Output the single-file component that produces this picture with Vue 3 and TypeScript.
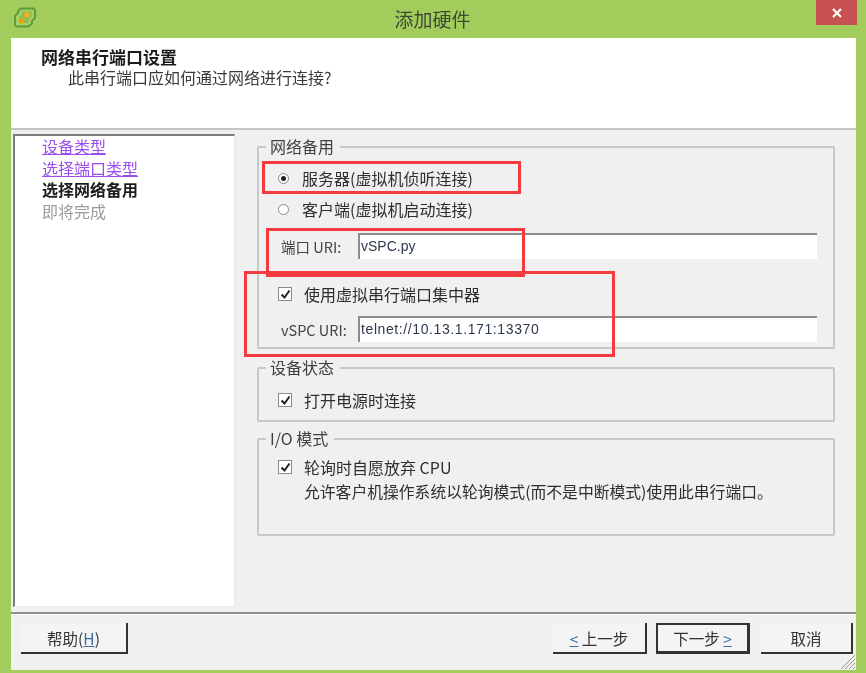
<script setup lang="ts">
const steps = [
  { label: '设备类型', kind: 'link' },
  { label: '选择端口类型', kind: 'link' },
  { label: '选择网络备用', kind: 'current' },
  { label: '即将完成', kind: 'todo' },
]
</script>

<template>
  <div class="window">
    <header class="titlebar">
      <svg class="logo" width="24" height="21" viewBox="0 0 24 21">
        <path d="M8 1.500H20.500l1.500 1.500V11l-3 3v2.500L15.500 19.500H3.500L2 18V9l3-3V4z" fill="#a6d066" stroke="#5f9c38" stroke-width="2" stroke-linejoin="round" />
        <path d="M9 4.500H18.500V10l-3 3v3H6V10l3-3z" fill="#8dbd52" />
        <circle cx="8.500" cy="14" r="2.800" fill="#e8a010" />
        <circle cx="14" cy="8" r="2.800" fill="#eeb020" />
      </svg>
      <span class="title">添加硬件</span>
      <button class="close">
        <svg width="10" height="10" viewBox="0 0 10 10"><path d="M1 1l8 8M9 1l-8 8" stroke="#fff" stroke-width="2.200" /></svg>
      </button>
    </header>

    <div class="dialog">
      <section class="head">
        <h1>网络串行端口设置</h1>
        <p>此串行端口应如何通过网络进行连接?</p>
      </section>

      <main class="body">
        <nav class="steps">
          <div v-for="s in steps" :key="s.label" :class="['step', s.kind]">{{ s.label }}</div>
        </nav>

        <div class="panes">
          <div class="group g1">
            <span class="legend">网络备用</span>
            <label class="opt"><span class="radio on"></span>服务器(虚拟机侦听连接)</label>
            <label class="opt second"><span class="radio"></span>客户端(虚拟机启动连接)</label>
            <div class="field f1"><span class="flabel">端口 URI:</span><div class="input">vSPC.py</div></div>
            <label class="opt third"><span class="check"><svg width="11" height="11" viewBox="0 0 11 11"><path d="M1.500 5.500l3 3 5-7" fill="none" stroke="#222" stroke-width="2" /></svg></span>使用虚拟串行端口集中器</label>
            <div class="field f2"><span class="flabel">vSPC URI:</span><div class="input wide">telnet://10.13.1.171:13370</div></div>
          </div>

          <div class="group g2">
            <span class="legend">设备状态</span>
            <label class="opt"><span class="check"><svg width="11" height="11" viewBox="0 0 11 11"><path d="M1.500 5.500l3 3 5-7" fill="none" stroke="#222" stroke-width="2" /></svg></span>打开电源时连接</label>
          </div>

          <div class="group g3">
            <span class="legend">I/O 模式</span>
            <label class="opt"><span class="check"><svg width="11" height="11" viewBox="0 0 11 11"><path d="M1.500 5.500l3 3 5-7" fill="none" stroke="#222" stroke-width="2" /></svg></span>轮询时自愿放弃 CPU</label>
            <p class="hint">允许客户机操作系统以轮询模式(而不是中断模式)使用此串行端口。</p>
          </div>
        </div>
      </main>

      <footer class="foot">
        <button class="btn help">帮助(<u>H</u>)</button>
        <div class="spacer"></div>
        <button class="btn back"><u>&lt;</u> 上一步</button>
        <button class="btn next">下一步 <u>&gt;</u></button>
        <button class="btn cancel">取消</button>
      </footer>
      <svg class="grip" width="18" height="18" viewBox="0 0 18 18"><path d="M17 3L3 17M17 7L7 17M17 11L11 17M17 15L15 17" stroke="#999" stroke-width="1" /></svg>
    </div>

    <div class="mark m1"></div>
    <div class="mark m2"></div>
    <div class="mark m3"></div>
  </div>
</template>

<style>
html, body { margin: 0; background: #a2cd5c; }
</style>

<style scoped>
.window {
  position: relative;
  width: 866px;
  height: 673px;
  background: #a2cd5c;
  overflow: hidden;
  font-family: "Noto Sans CJK SC", "Liberation Sans", sans-serif;
  font-size: 16px;
  color: #333;
  display: flex;
  flex-direction: column;
  box-sizing: border-box;
  padding: 0 10px 3px 11px;
  filter: blur(0.5px);
}
.titlebar {
  height: 38px;
  flex: none;
  display: flex;
  align-items: center;
  justify-content: center;
  position: relative;
}
.logo { position: absolute; left: 2px; top: 7px; }
.title { font-size: 19px; color: #3d4a33; margin-top: -2px; margin-left: -2px; }
.close {
  position: absolute;
  right: -1px;
  top: 0;
  width: 41px;
  height: 25px;
  padding: 0;
  border: 0;
  background: #c75050;
  display: flex;
  align-items: center;
  justify-content: center;
}
.dialog {
  position: relative;
  flex: 1;
  display: flex;
  flex-direction: column;
  background: #f0f0f0;
  min-height: 0;
}
.head {
  height: 92px;
  flex: none;
  box-sizing: border-box;
  background: #fff;
  padding: 9px 0 0 30px;
  border-bottom: 2px solid #c4c4c4;
}
.head h1 { margin: 0; font-size: 17px; line-height: 20px; font-weight: 700; color: #1c1c1c; }
.head p { margin: 0 0 0 27px; font-size: 16px; line-height: 20px; color: #3a3a3a; }
.body {
  flex: 1;
  display: flex;
  min-height: 0;
  padding: 4px 0 5px 2px;
}
.steps {
  width: 222px;
  flex: none;
  box-sizing: border-box;
  background: #fff;
  border-top: 2px solid #7d7d7d;
  border-left: 2px solid #7d7d7d;
  border-right: 1px solid #e8e8e8;
  border-bottom: 1px solid #e8e8e8;
  padding: 0 0 0 27px;
}
.step { line-height: 21.500px; font-size: 16px; }
.step.link { color: #9b4df0; text-decoration: underline; }
.step.current { font-weight: 700; color: #1c1c1c; }
.step.todo { color: #9a9a9a; }
.panes {
  flex: 1;
  padding: 12px 21px 0 22px;
  display: flex;
  flex-direction: column;
}
.group {
  position: relative;
  box-sizing: border-box;
  border: 2px solid #c8c8c8;
  border-radius: 2px;
}
.g1 { height: 203px; padding-top: 19px; }
.g2 { height: 55px; margin-top: 18px; padding-top: 20px; }
.g3 { height: 98px; margin-top: 16px; padding-top: 16px; }
.legend {
  position: absolute;
  left: 7px;
  top: -12px;
  padding: 0 6px 0 4px;
  background: #f0f0f0;
  line-height: 20px;
  font-size: 16px;
  color: #3f3f3f;
}
.opt {
  display: flex;
  align-items: center;
  height: 22px;
  padding-left: 19px;
  color: #2e2e2e;
}
.opt.second { margin-top: 9px; }
.opt.third { margin-top: 24px; }
.radio {
  width: 11px;
  height: 11px;
  border-radius: 50%;
  background: #fff;
  border: 1px solid #8a8a8a;
  margin-right: 13px;
  box-sizing: border-box;
  display: flex;
  align-items: center;
  justify-content: center;
}
.radio.on::after {
  content: "";
  width: 5px;
  height: 5px;
  border-radius: 50%;
  background: #222;
}
.check {
  width: 14px;
  height: 14px;
  box-sizing: border-box;
  background: #fff;
  border: 1px solid #8a8a8a;
  margin-right: 12px;
  display: flex;
  align-items: center;
  justify-content: center;
}
.field { display: flex; align-items: center; height: 26px; }
.f1 { margin-top: 13px; }
.f2 { margin-top: 11px; }
.flabel { width: 99px; box-sizing: border-box; padding-left: 22px; font-size: 14.500px; color: #444; white-space: nowrap; }
.input {
  width: 459px;
  height: 26px;
  box-sizing: border-box;
  background: #fff;
  border-top: 2px solid #8c8c8c;
  border-left: 2px solid #8c8c8c;
  padding-left: 1px;
  line-height: 22px;
  font-size: 14px;
  font-family: "Liberation Sans", "Noto Sans CJK SC", sans-serif;
  color: #2c3a4c;
}
.input.wide { letter-spacing: 0.6px; }
.hint { margin: 4px 0 0 45px; font-size: 15.800px; line-height: 20px; color: #2e2e2e; white-space: nowrap; }
.foot {
  height: 58px;
  flex: none;
  box-sizing: border-box;
  border-top: 2px solid #8e8e8e;
  box-shadow: inset 0 1px 0 #fff;
  display: flex;
  align-items: flex-start;
  padding: 9px 0 0 10px;
}
.spacer { flex: 1; }
.btn {
  height: 31px;
  padding: 0;
  box-sizing: border-box;
  background: #f4f4f4;
  border: 0;
  border-right: 2px solid #333;
  border-bottom: 2px solid #333;
  font: inherit;
  font-size: 15.500px;
  color: #333;
}
.btn u { color: #3b6ea5; }
.help { width: 107px; }
.back { width: 94px; }
.next {
  width: 94px;
  margin-left: 9px;
  border: 2px solid #333;
  border-bottom-width: 3px;
  border-right-width: 3px;
}
.cancel { width: 92px; margin-left: 11px; margin-right: 3px; }
.grip { position: absolute; right: 0; bottom: 0; }
.mark { position: absolute; box-sizing: border-box; border: 3px solid #f43b3f; pointer-events: none; }
.m1 { left: 262px; top: 161px; width: 259px; height: 33px; }
.m2 { left: 266px; top: 228px; width: 259px; height: 49px; }
.m3 { left: 244px; top: 271px; width: 371px; height: 86px; }
</style>
